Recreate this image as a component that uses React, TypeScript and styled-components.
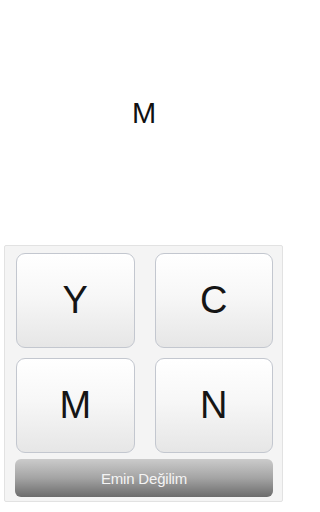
import React from "react";
import styled, { createGlobalStyle } from "styled-components";

const GlobalStyle = createGlobalStyle`
  html, body {
    margin: 0;
    padding: 0;
    background: #ffffff;
    font-family: "Liberation Sans", Arial, sans-serif;
  }
`;

const Screen = styled.div`
  width: 288px;
  height: 512px;
  display: flex;
  flex-direction: column;
`;

const Prompt = styled.div`
  height: 245px;
  display: flex;
  align-items: center;
  justify-content: center;
  font-size: 29px;
  color: #111;
  padding-bottom: 18px;
  box-sizing: border-box;
`;

const Panel = styled.div`
  margin: 0 5px 0 4px;
  padding: 7px 9px 4px 10px;
  background: #f4f4f4;
  border: 1px solid #e2e2e2;
  border-radius: 2px;
`;

const KeyGrid = styled.div`
  display: grid;
  grid-template-columns: 1fr 1fr;
  column-gap: 20px;
  row-gap: 10px;
  padding: 0 0 0 1px;
`;

const Key = styled.button`
  height: 95px;
  border: 1px solid #c3c7cf;
  border-radius: 9px;
  background: linear-gradient(to bottom, #ffffff 0%, #f7f7f7 45%, #e6e6e6 100%);
  font-family: "Liberation Sans", Arial, sans-serif;
  font-size: 38px;
  color: #151515;
  display: flex;
  align-items: center;
  justify-content: center;
  padding: 0;
`;

const UnsureButton = styled.button`
  width: 100%;
  height: 38px;
  margin-top: 6px;
  border: none;
  border-radius: 6px;
  background: linear-gradient(to bottom, #cbcbcb 0%, #a4a4a4 50%, #6c6c6c 100%);
  color: #f4f4f4;
  font-family: "Liberation Sans", Arial, sans-serif;
  font-size: 15px;
  letter-spacing: -0.2px;
  padding: 0;
`;

const letters = ["Y", "C", "M", "N"];

export default function App() {
  return (
    <Screen>
      <GlobalStyle />
      <Prompt>M</Prompt>
      <Panel>
        <KeyGrid>
          {letters.map((l) => (
            <Key key={l}>{l}</Key>
          ))}
        </KeyGrid>
        <UnsureButton>Emin Değilim</UnsureButton>
      </Panel>
    </Screen>
  );
}
